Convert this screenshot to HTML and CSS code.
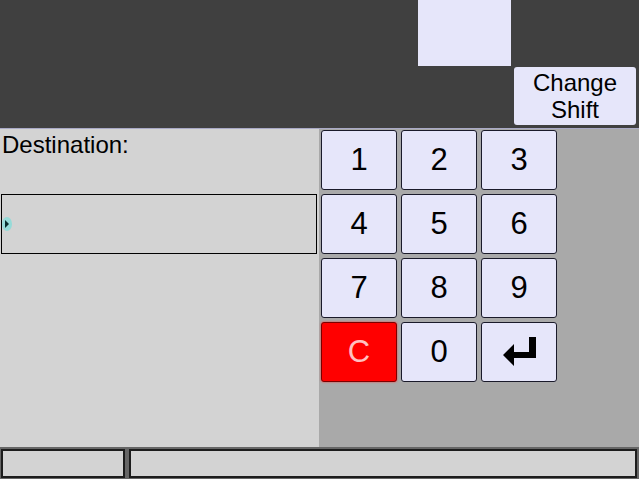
FILE: index.html
```html
<!DOCTYPE html>
<html>
<head>
<meta charset="utf-8">
<link rel="stylesheet" href="styles.css">
</head>
<body>
<div class="screen">
  <header class="top">
    <div class="blank"></div>
    <div class="shift-btn">Change<br>Shift</div>
  </header>
  <main class="main">
    <section class="left">
      <div class="label">Destination:</div>
      <div class="field">
        <svg class="caret" width="10" height="14" viewBox="0 0 10 14">
          <ellipse cx="5" cy="7" rx="5" ry="7" fill="#8fdcd8" opacity="0.9"/>
          <polygon points="3,3 7,7 3,11" fill="#0a2e2e"/>
        </svg>
      </div>
    </section>
    <section class="right">
      <div class="keypad">
        <div class="key">1</div>
        <div class="key">2</div>
        <div class="key">3</div>
        <div class="key">4</div>
        <div class="key">5</div>
        <div class="key">6</div>
        <div class="key">7</div>
        <div class="key">8</div>
        <div class="key">9</div>
        <div class="key key-clear">C</div>
        <div class="key">0</div>
        <div class="key">
          <svg width="33" height="30" viewBox="0 0 33 30">
            <path d="M26 0 H33 V21 H11 V29 L0 18 L11 7 V15 H26 Z" fill="#000"/>
          </svg>
        </div>
      </div>
    </section>
  </main>
  <footer class="bottom">
    <div class="status status-small"></div>
    <div class="status status-wide"></div>
  </footer>
</div>
</body>
</html>
```

FILE: styles.css
```css
html, body {
  margin: 0;
  padding: 0;
}
body {
  width: 639px;
  height: 479px;
  overflow: hidden;
  font-family: "Liberation Sans", Arial, sans-serif;
  background: #d3d3d3;
}
.screen {
  display: flex;
  flex-direction: column;
  width: 639px;
  height: 479px;
}
.top {
  display: flex;
  height: 128px;
  background: #404040;
  border-bottom: 1px solid #a9a9c6;
  flex: none;
}
.blank {
  margin-left: 418px;
  width: 93px;
  height: 66px;
  background: #e6e6fa;
}
.shift-btn {
  margin-left: 3px;
  margin-top: 67px;
  width: 122px;
  height: 58px;
  background: #e6e6fa;
  border-radius: 3px;
  display: flex;
  align-items: center;
  justify-content: center;
  text-align: center;
  font-size: 24px;
  line-height: 27px;
  color: #000;
}
.main {
  display: flex;
  height: 318px;
  flex: none;
}
.left {
  width: 319px;
  background: #d3d3d3;
  padding-left: 1px;
  box-sizing: border-box;
}
.label {
  margin-top: 2px;
  padding-left: 1px;
  font-size: 24px;
  line-height: 28px;
  color: #000;
}
.field {
  margin-top: 35px;
  width: 316px;
  height: 60px;
  box-sizing: border-box;
  border: 1px solid #000;
  background: #d3d3d3;
  display: flex;
  align-items: center;
  padding-left: 0;
}
.caret {
  display: block;
}
.right {
  flex: 1;
  background: #a9a9a9;
  padding: 1px 0 0 2px;
}
.keypad {
  display: grid;
  grid-template-columns: repeat(3, 76px);
  grid-template-rows: repeat(4, 60px);
  gap: 4px;
}
.key {
  box-sizing: border-box;
  background: #e6e6fa;
  border: 1px solid #1a1a2a;
  border-radius: 3px;
  display: flex;
  align-items: center;
  justify-content: center;
  font-size: 31px;
  color: #000;
}
.key-clear {
  background: #ff0000;
  border-color: #7a0000;
  color: #ffc0c0;
  box-shadow: 0 0 2px #ff3030;
}
.bottom {
  flex: 1;
  background: #666666;
  display: flex;
  gap: 4px;
  padding: 2px 2px 1px 1px;
}
.status {
  box-sizing: border-box;
  border: 2px solid #1c1c1c;
  background: #d3d3d3;
}
.status-small {
  width: 124px;
}
.status-wide {
  flex: 1;
}
```
